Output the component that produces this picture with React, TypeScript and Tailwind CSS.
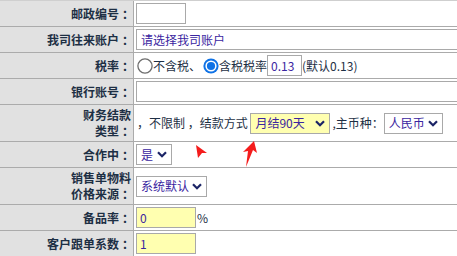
import React from "react";

const font = { fontFamily: '"Noto Sans CJK SC", "Noto Sans", sans-serif' };

function Chevron() {
  return (
    <svg width="10" height="7" viewBox="0 0 10 7" className="shrink-0">
      <path d="M1 1.2 L5 5.2 L9 1.2" fill="none" stroke="#1b2466" strokeWidth="2.2" />
    </svg>
  );
}

function C() {
  return <span className="relative left-[3px]">：</span>;
}

function Label({ children, tall }: { children: React.ReactNode; tall?: boolean }) {
  return (
    <div
      className={`w-[134px] shrink-0 bg-[#e1e1e1] border-r border-[#ababab] flex items-center justify-end pr-[2px] font-bold text-[12px] text-[#1d2f44] ${
        tall ? "leading-[16px] text-right" : "leading-[14px]"
      }`}
    >
      {children}
    </div>
  );
}

function Row({ children, tall, className = "" }: { children: React.ReactNode; tall?: boolean; className?: string }) {
  return (
    <div className={`flex border-b border-[#ababab] ${tall ? "h-[37px]" : "h-[26px]"} ${className}`}>
      {children}
    </div>
  );
}

function Sel({ text, w, yellow }: { text: string; w: string; yellow?: boolean }) {
  return (
    <div
      className={`${w} h-[21px] border border-[#a9a9a9] ${
        yellow ? "bg-[#ffffb0]" : "bg-white"
      } flex items-center justify-between pl-[4px] pr-[4px] text-[12px] text-[#3a25a0] shrink-0`}
    >
      <span>{text}</span>
      <Chevron />
    </div>
  );
}

function Radio({ checked }: { checked?: boolean }) {
  return (
    <svg width="16" height="16" viewBox="0 0 16 16" className="shrink-0">
      {checked ? (
        <>
          <circle cx="8" cy="8" r="7.6" fill="#0f72e6" />
          <circle cx="8" cy="8" r="5.6" fill="#fff" />
          <circle cx="8" cy="8" r="4.1" fill="#0f72e6" />
        </>
      ) : (
        <circle cx="8" cy="8" r="7.1" fill="#fff" stroke="#6e6e6e" strokeWidth="1.3" />
      )}
    </svg>
  );
}

export default function App() {
  return (
    <div className="w-[457px] h-[256px] overflow-hidden bg-white" style={font}>
      <div className="w-[560px] border-t border-[#cfcfcf]">
        <Row>
          <Label>
            邮政编号<C />
          </Label>
          <div className="flex-1 flex items-center pl-[2px]">
            <div className="w-[50px] h-[21px] border border-[#a9a9a9] bg-white" />
          </div>
        </Row>
        <Row>
          <Label>
            我司往来账户<C />
          </Label>
          <div className="flex-1 flex items-center pl-[2px]">
            <div className="w-[400px] h-[21px] border border-[#a9a9a9] bg-white flex items-center pl-[4px] text-[12px] text-[#3a25a0]">
              请选择我司账户
            </div>
          </div>
        </Row>
        <Row>
          <Label>
            税率<C />
          </Label>
          <div className="flex-1 flex items-center pl-[3px] text-[12px] text-[#1d2f44] whitespace-nowrap">
            <Radio />
            <span>不含税、</span>
            <span className="ml-[2px]">
              <Radio checked />
            </span>
            <span>含税税率</span>
            <div className="w-[35px] h-[21px] border border-[#a9a9a9] bg-white flex items-center pl-[3px] text-[#3a25a0]">
              0.13
            </div>
            <span>(默认0.13)</span>
          </div>
        </Row>
        <Row>
          <Label>
            银行账号<C />
          </Label>
          <div className="flex-1 flex items-center pl-[2px]">
            <div className="w-[400px] h-[21px] border border-[#a9a9a9] bg-white" />
          </div>
        </Row>
        <Row tall>
          <Label tall>
            <span>
              财务结款
              <br />
              类型<C />
            </span>
          </Label>
          <div className="flex-1 flex items-center pl-[3px] text-[12px] text-[#1d2f44] whitespace-pre">
            <span>，不限制 ，结款方式 </span>
            <Sel text="月结90天" w="w-[80px]" yellow />
            <span className="ml-[2px]">,主币种：</span>
            <Sel text="人民币" w="w-[59px]" />
          </div>
        </Row>
        <Row className="relative">
          <Label>
            合作中<C />
          </Label>
          <div className="flex-1 flex items-center pl-[2px]">
            <Sel text="是" w="w-[36px]" />
          </div>
          <svg className="absolute left-[194px] top-[1px]" width="16" height="16" viewBox="0 0 16 16">
            <polygon points="2,2 13,10 8,10 4,15" fill="#f41c1c" />
          </svg>
          <svg className="absolute left-[241px] top-[-2px]" width="18" height="28" viewBox="0 0 18 28">
            <polygon points="13,1 16,13 12,10 5,27 7,11 2,12" fill="#f41c1c" />
          </svg>
        </Row>
        <Row tall>
          <Label tall>
            <span>
              销售单物料
              <br />
              价格来源<C />
            </span>
          </Label>
          <div className="flex-1 flex items-center pl-[2px]">
            <Sel text="系统默认" w="w-[71px]" />
          </div>
        </Row>
        <Row>
          <Label>
            备品率<C />
          </Label>
          <div className="flex-1 flex items-center pl-[2px] text-[12px] text-[#1d2f44]">
            <div className="w-[60px] h-[21px] border border-[#a9a9a9] bg-[#ffffb0] flex items-center pl-[3px] text-[#3a25a0]">
              0
            </div>
            <span className="ml-[1px]">%</span>
          </div>
        </Row>
        <Row>
          <Label>
            客户跟单系数<C />
          </Label>
          <div className="flex-1 flex items-center pl-[2px] text-[12px]">
            <div className="w-[60px] h-[21px] border border-[#a9a9a9] bg-[#ffffb0] flex items-center pl-[3px] text-[#3a25a0]">
              1
            </div>
          </div>
        </Row>
      </div>
    </div>
  );
}
